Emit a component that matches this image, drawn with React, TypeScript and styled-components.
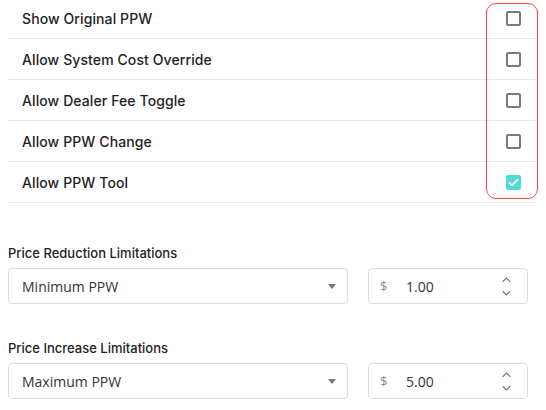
import styled, { createGlobalStyle } from "styled-components";
import React from "react";

const GlobalStyle = createGlobalStyle`
  body {
    margin: 0;
    background: #ffffff;
    font-family: "Inter", "Liberation Sans", sans-serif;
    color: #222222;
  }
`;

const Page = styled.div`
  width: 546px;
  height: 410px;
  padding: 0 18px 0 8px;
  box-sizing: border-box;
  overflow: hidden;
`;

const List = styled.div`
  position: relative;
  margin-top: -2px;
`;

const Row = styled.div`
  height: 40px;
  display: flex;
  align-items: center;
  justify-content: space-between;
  border-bottom: 1px solid #e8e8e8;
  padding: 0 15px 0 14px;
  margin-right: -8px;
`;

const RowLabel = styled.span`
  font-size: 14px;
  font-weight: 500;
  color: #1e1e1e;
  letter-spacing: 0.1px;
`;

const Box = styled.div<{ $checked?: boolean }>`
  width: 15px;
  height: 15px;
  box-sizing: border-box;
  border-radius: 2px;
  border: ${(p) => (p.$checked ? "none" : "2px solid #7a7a7a")};
  background: ${(p) => (p.$checked ? "#4ddcd2" : "transparent")};
  display: flex;
  align-items: center;
  justify-content: center;
`;

const Highlight = styled.div`
  position: absolute;
  left: 478px;
  top: 5px;
  width: 52px;
  height: 196px;
  box-sizing: border-box;
  border: 1.5px solid #f04a3a;
  border-radius: 10px;
  pointer-events: none;
`;

const Section = styled.div<{ $top: number }>`
  margin-top: ${(p) => p.$top}px;
`;

const SectionLabel = styled.div`
  font-size: 13px;
  font-weight: 500;
  line-height: 18px;
  color: #222;
  margin-bottom: 6px;
`;

const Fields = styled.div`
  display: grid;
  grid-template-columns: 340px 160px;
  column-gap: 20px;
  align-items: center;
`;

const SelectBox = styled.div`
  height: 36px;
  box-sizing: border-box;
  border: 1px solid #dcdcdc;
  border-radius: 4px;
  display: flex;
  align-items: center;
  justify-content: space-between;
  padding: 0 11px 0 13px;
  font-family: "Open Sans", "Noto Sans", sans-serif;
  font-size: 14px;
  color: #333;
`;

const Caret = styled.span`
  width: 0;
  height: 0;
  border-left: 4.5px solid transparent;
  border-right: 4.5px solid transparent;
  border-top: 5px solid #777;
  margin-top: 1px;
`;

const NumberBox = styled.div`
  height: 36px;
  box-sizing: border-box;
  border: 1px solid #dcdcdc;
  border-radius: 4px;
  display: flex;
  align-items: center;
  padding: 0 16px 0 11px;
  font-family: "Open Sans", "Noto Sans", sans-serif;
  font-size: 14px;
  color: #333;
`;

const Dollar = styled.span`
  color: #8a8a8a;
  font-size: 13px;
  width: 26px;
`;

const Value = styled.span`
  flex: 1;
`;

const Spinner = styled.div`
  display: flex;
  flex-direction: column;
  gap: 9px;
  margin-top: 1px;
`;

const Check = () => (
  <svg width="11" height="9" viewBox="0 0 11 9">
    <path d="M1.2 4.6 L4.1 7.3 L9.8 1.4" fill="none" stroke="#fff" strokeWidth="1.8" strokeLinecap="round" strokeLinejoin="round" />
  </svg>
);

const Chevron = ({ up }: { up?: boolean }) => (
  <svg width="9" height="5" viewBox="0 0 9 5">
    <path d={up ? "M1 4.5 L4.5 1 L8 4.5" : "M1 0.5 L4.5 4 L8 0.5"} fill="none" stroke="#777" strokeWidth="1.1" strokeLinecap="round" strokeLinejoin="round" />
  </svg>
);

const options = [
  { label: "Show Original PPW", checked: false },
  { label: "Allow System Cost Override", checked: false },
  { label: "Allow Dealer Fee Toggle", checked: false },
  { label: "Allow PPW Change", checked: false },
  { label: "Allow PPW Tool", checked: true },
];

const limits = [
  { title: "Price Reduction Limitations", select: "Minimum PPW", value: "1.00", top: 41 },
  { title: "Price Increase Limitations", select: "Maximum PPW", value: "5.00", top: 35 },
];

export default function App() {
  return (
    <Page>
      <GlobalStyle />
      <List>
        {options.map((o) => (
          <Row key={o.label}>
            <RowLabel>{o.label}</RowLabel>
            <Box $checked={o.checked}>{o.checked && <Check />}</Box>
          </Row>
        ))}
        <Highlight />
      </List>
      {limits.map((l) => (
        <Section key={l.title} $top={l.top}>
          <SectionLabel>{l.title}</SectionLabel>
          <Fields>
            <SelectBox>
              <span>{l.select}</span>
              <Caret />
            </SelectBox>
            <NumberBox>
              <Dollar>$</Dollar>
              <Value>{l.value}</Value>
              <Spinner>
                <Chevron up />
                <Chevron />
              </Spinner>
            </NumberBox>
          </Fields>
        </Section>
      ))}
    </Page>
  );
}
